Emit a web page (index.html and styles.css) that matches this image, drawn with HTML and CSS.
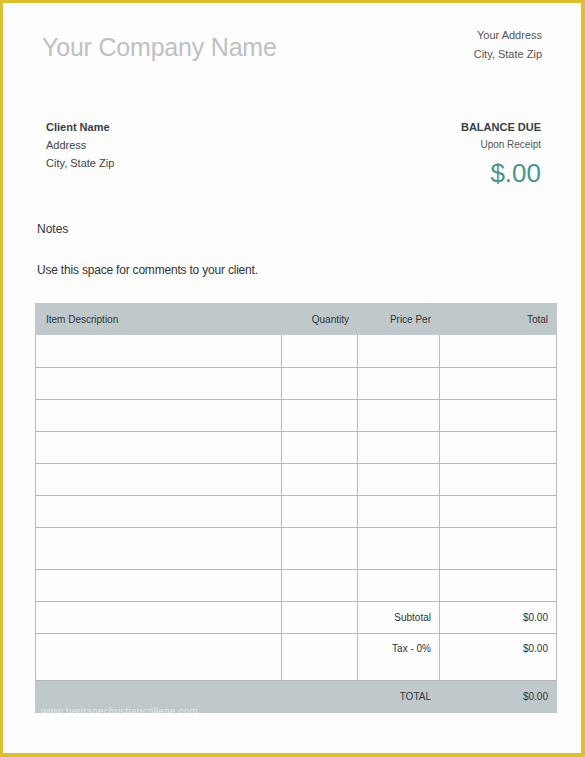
FILE: index.html
```html
<!DOCTYPE html>
<html>
<head>
<meta charset="utf-8">
<link rel="stylesheet" href="styles.css">
</head>
<body>
<div class="page">
  <div class="top">
    <div class="company">Your Company Name</div>
    <div class="addr">
      <div>Your Address</div>
      <div>City, State Zip</div>
    </div>
  </div>
  <div class="billing">
    <div class="client">
      <div class="bold">Client Name</div>
      <div>Address</div>
      <div>City, State Zip</div>
    </div>
    <div class="balance">
      <div class="bold">BALANCE DUE</div>
      <div class="small">Upon Receipt</div>
      <div class="amount">$.00</div>
    </div>
  </div>
  <div class="notes">
    <div class="notes-title">Notes</div>
    <div class="notes-text">Use this space for comments to your client.</div>
  </div>
  <div class="table-wrap">
    <table class="items">
      <colgroup>
        <col class="c1"><col class="c2"><col class="c3"><col class="c4">
      </colgroup>
      <thead>
        <tr class="head">
          <th class="left">Item Description</th>
          <th class="right">Quantity</th>
          <th class="right">Price Per</th>
          <th class="right">Total</th>
        </tr>
      </thead>
      <tbody>
        <tr class="r33"><td></td><td></td><td></td><td></td></tr>
        <tr class="r32"><td></td><td></td><td></td><td></td></tr>
        <tr class="r32"><td></td><td></td><td></td><td></td></tr>
        <tr class="r32"><td></td><td></td><td></td><td></td></tr>
        <tr class="r32"><td></td><td></td><td></td><td></td></tr>
        <tr class="r32"><td></td><td></td><td></td><td></td></tr>
        <tr class="r42"><td></td><td></td><td></td><td></td></tr>
        <tr class="r32"><td></td><td></td><td></td><td></td></tr>
        <tr class="r32 sum"><td></td><td></td><td class="right">Subtotal</td><td class="right">$0.00</td></tr>
        <tr class="r47 sum tax"><td></td><td></td><td class="right">Tax - 0%</td><td class="right">$0.00</td></tr>
        <tr class="r32 total"><td></td><td></td><td class="right">TOTAL</td><td class="right">$0.00</td></tr>
      </tbody>
    </table>
    <div class="watermark">www.heritagechristiancollege.com</div>
  </div>
</div>
</body>
</html>
```
FILE: styles.css
```css
html, body {
  margin: 0;
  padding: 0;
}
body {
  font-family: "Liberation Sans", Arial, sans-serif;
  color: #333;
}
.page {
  width: 585px;
  height: 757px;
  box-sizing: border-box;
  border-style: solid;
  border-color: #dcc02e;
  border-width: 3px 4px 4px 3px;
  background: #fdfdfd;
  display: flex;
  flex-direction: column;
}
.top {
  display: flex;
  justify-content: space-between;
  padding: 0 39px;
}
.company {
  font-size: 25px;
  line-height: 30px;
  color: #c0c0c0;
  margin-top: 29px;
  letter-spacing: -0.2px;
}
.addr {
  margin-top: 23px;
  font-size: 11px;
  line-height: 19px;
  text-align: right;
  color: #555;
}
.billing {
  display: flex;
  justify-content: space-between;
  padding: 0 40px 0 43px;
  margin-top: 54px;
}
.client, .balance {
  font-size: 11px;
  line-height: 18px;
  color: #444;
}
.balance {
  text-align: right;
}
.bold {
  font-weight: bold;
  color: #3a3f45;
}
.small {
  font-size: 10px;
  color: #555;
}
.amount {
  font-size: 26px;
  line-height: 32px;
  color: #4a9390;
  margin-top: 3px;
}
.notes {
  padding-left: 34px;
  font-size: 12px;
  color: #333;
  margin-top: 32px;
}
.notes-title {
  line-height: 16px;
}
.notes-text {
  margin-top: 25px;
  line-height: 16px;
  letter-spacing: -0.2px;
}
.table-wrap {
  position: relative;
  padding-left: 32px;
  margin-top: 25px;
}
.items {
  border-collapse: collapse;
  table-layout: fixed;
  width: 521px;
  font-size: 10px;
  color: #2e3438;
}
.c1 { width: 246px; }
.c2 { width: 76px; }
.c3 { width: 82px; }
.c4 { width: 117px; }
.items th, .items td {
  border: 1px solid #b9b9b9;
  padding: 0 8px 0 10px;
  font-weight: normal;
  vertical-align: middle;
}
.items .left { text-align: left; }
.items .right { text-align: right; }
.head th {
  background: #bfc9cc;
  border-color: #bfc9cc;
  height: 31px;
  box-sizing: border-box;
}
.r33 td { height: 33px; box-sizing: border-box; }
.r32 td { height: 32px; box-sizing: border-box; }
.r42 td { height: 42px; box-sizing: border-box; }
.r47 td { height: 47px; box-sizing: border-box; }
.tax td { vertical-align: top; padding-top: 9px; }
.total td {
  background: #bfc9cc;
  border-color: #bfc9cc;
}
.watermark {
  position: absolute;
  left: 38px;
  top: 403px;
  font-size: 10px;
  color: rgba(255, 255, 255, 0.55);
  letter-spacing: 0.2px;
}
```
